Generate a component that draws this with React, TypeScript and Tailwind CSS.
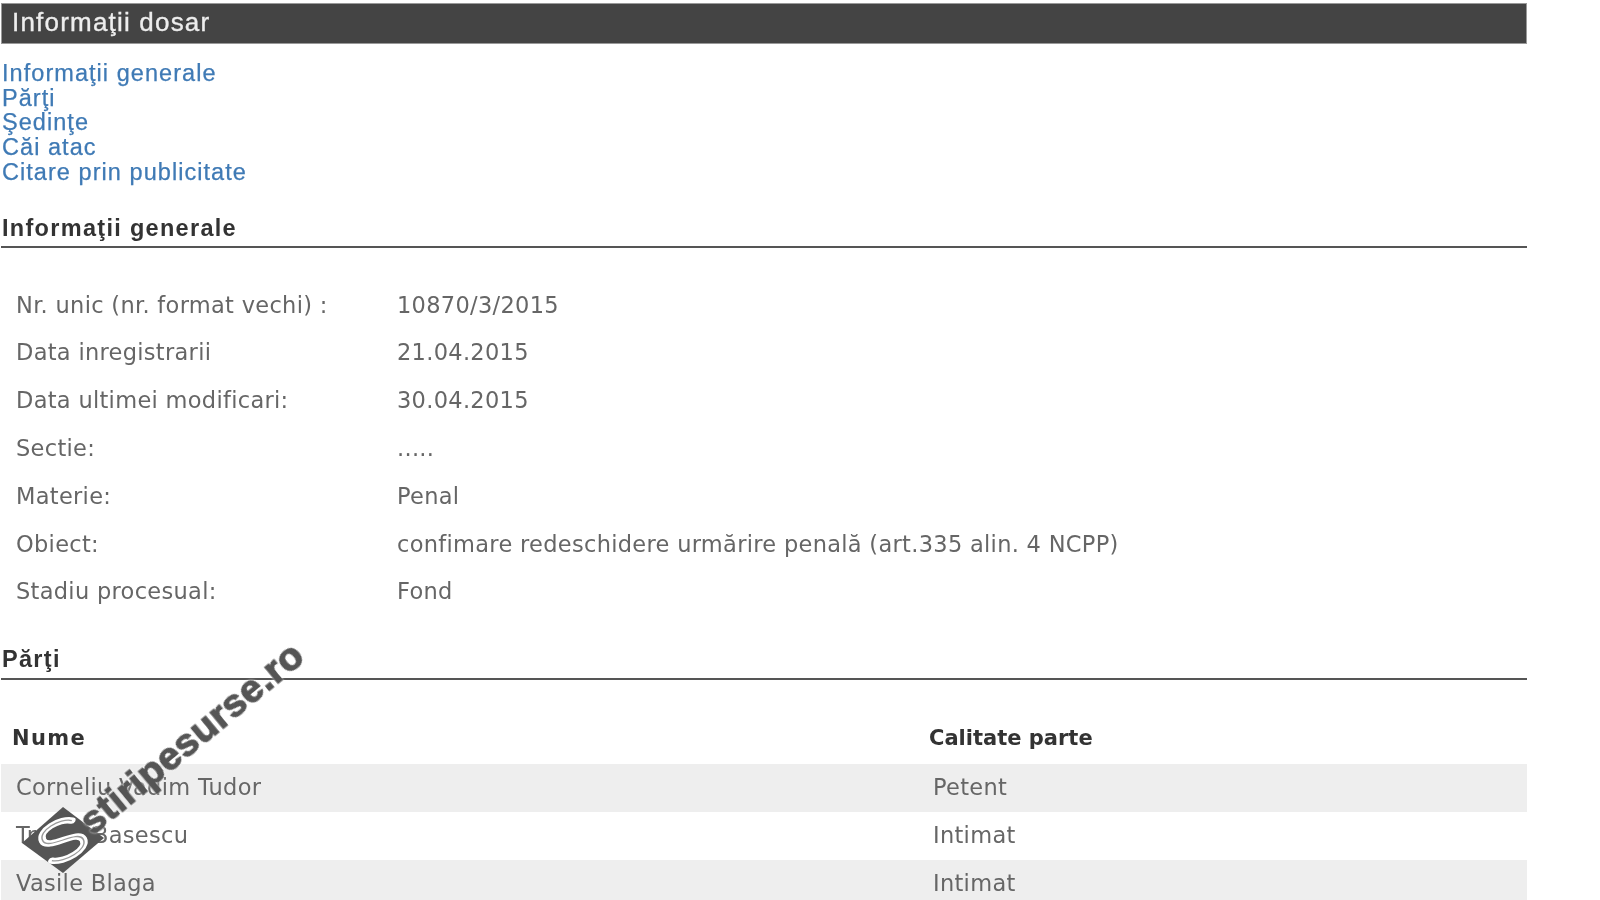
function InfoRow({ label, value }: { label: string; value: string }) {
  return (
    <div className="flex h-[47.8px] items-center pl-[15px] text-[22.5px] tracking-[0.3px] text-[#666] font-['DejaVu_Sans',sans-serif]">
      <div className="w-[381px] shrink-0">{label}</div>
      <div>{value}</div>
    </div>
  );
}

function PartyRow({ name, role, shaded }: { name: string; role: string; shaded?: boolean }) {
  return (
    <div className={`flex h-[47.8px] items-center pl-[15px] text-[22.5px] tracking-[0.3px] text-[#666] font-['DejaVu_Sans',sans-serif] ${shaded ? "bg-[#eeeeee]" : ""}`}>
      <div className="w-[917px] shrink-0">{name}</div>
      <div>{role}</div>
    </div>
  );
}

function Watermark() {
  const s = "M13 -13 C6 -21 -14 -20 -14 -9 C-14 3 14 -3 14 9 C14 20 -7 21 -15 13";
  return (
    <svg className="absolute left-[15px] top-[640px] overflow-visible" width="300" height="240" viewBox="0 0 300 240">
      <polygon points="48,167 7,203 48,233 89,198" fill="#555" />
      <g transform="translate(48 200) rotate(-28) scale(1.3 1)">
        <path d={s} fill="none" stroke="#fff" strokeWidth="6" strokeLinecap="round" />
        <path d={s} fill="none" stroke="#999" strokeWidth="1.2" />
      </g>
      <text
        transform="translate(78 196) rotate(-39.5)"
        fill="#555"
        stroke="#555"
        strokeWidth="1.2"
        fontFamily="'Liberation Sans', sans-serif"
        fontWeight="700"
        fontSize="39"
        letterSpacing="0.4"
        className="[filter:drop-shadow(0_0_1px_white)]"
      >
        stiripesurse.ro
      </text>
    </svg>
  );
}

export default function App() {
  return (
    <div className="relative h-[900px] w-[1600px] overflow-hidden bg-white font-['Liberation_Sans',sans-serif] blur-[0.5px]">
      <div className="ml-px w-[1526px] pt-[3px]">
        <div className="flex h-[41px] items-center border border-[#999] bg-[#444] pb-[2px] pl-[10px] text-[26px] tracking-[1.2px] text-[#eee] [-webkit-text-stroke:0.35px]">
          Informaţii dosar
        </div>
        <nav className="mt-[17px] flex flex-col pl-px text-[23.5px] leading-[24.7px] tracking-[1.05px] text-[#3f7ab5] [-webkit-text-stroke:0.25px]">
          <a>Informaţii generale</a>
          <a>Părţi</a>
          <a>Şedinţe</a>
          <a>Căi atac</a>
          <a>Citare prin publicitate</a>
        </nav>
        <h2 className="mt-[30px] border-b-2 border-[#555] pb-[5px] pl-px text-[23.5px] leading-[26px] font-bold tracking-[1.3px] text-[#333]">
          Informaţii generale
        </h2>
        <div className="mt-[34px]">
          <InfoRow label="Nr. unic (nr. format vechi) :" value="10870/3/2015" />
          <InfoRow label="Data inregistrarii" value="21.04.2015" />
          <InfoRow label="Data ultimei modificari:" value="30.04.2015" />
          <InfoRow label="Sectie:" value="....." />
          <InfoRow label="Materie:" value="Penal" />
          <InfoRow label="Obiect:" value="confimare redeschidere urmărire penală (art.335 alin. 4 NCPP)" />
          <InfoRow label="Stadiu procesual:" value="Fond" />
        </div>
        <h2 className="mt-[30px] border-b-2 border-[#555] pb-[6px] pl-px text-[23.5px] leading-[26px] font-bold tracking-[1.3px] text-[#333]">
          Părţi
        </h2>
        <div className="mt-[30px] flex h-[54px] items-center pt-[4px] pl-[11px] text-[21px] font-bold text-[#333] font-['DejaVu_Sans',sans-serif]">
          <div className="w-[917px] shrink-0 tracking-[1.4px]">Nume</div>
          <div>Calitate parte</div>
        </div>
        <PartyRow shaded name="Corneliu Vadim Tudor" role="Petent" />
        <PartyRow name="Traian Basescu" role="Intimat" />
        <PartyRow shaded name="Vasile Blaga" role="Intimat" />
      </div>
      <Watermark />
    </div>
  );
}
